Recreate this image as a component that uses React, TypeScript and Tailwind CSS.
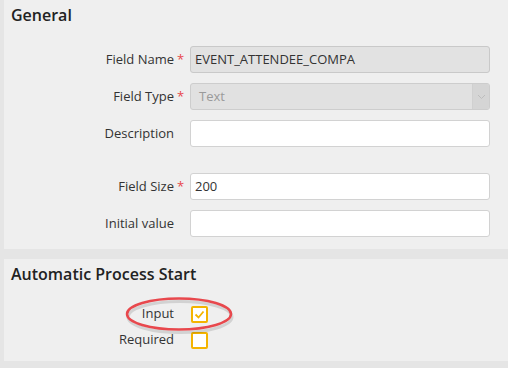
import { ReactNode } from 'react'

const fieldRows = [
  { label: 'Field Name', required: true, value: 'EVENT_ATTENDEE_COMPA', kind: 'readonly', gap: 'mt-[20px]' },
  { label: 'Field Type', required: true, value: 'Text', kind: 'select', gap: 'mt-[10px]' },
  { label: 'Description', required: false, value: '', kind: 'text', gap: 'mt-[10px]' },
  { label: 'Field Size', required: true, value: '200', kind: 'text', gap: 'mt-[26px]' },
  { label: 'Initial value', required: false, value: '', kind: 'text', gap: 'mt-[10px]' },
]

function Row({ label, required, gap, children }: { label: string; required?: boolean; gap: string; children: ReactNode }) {
  return (
    <div className={`flex items-center ${gap}`}>
      <div className="w-[170px] text-right text-[13px] text-[#333]">{label}</div>
      <div className="w-[16px] pl-[3px] text-[13px] leading-none text-[#e8474b]">{required ? '*' : ''}</div>
      {children}
    </div>
  )
}

function FieldInput({ kind, value }: { kind: string; value: string }) {
  if (kind === 'select') {
    return (
      <div className="flex h-[27px] w-[300px] items-stretch overflow-hidden rounded-[3px] border border-[#cdcdcd] bg-[#e1e1e1]">
        <div className="flex-1 pl-[8px] text-[13px] leading-[25px] text-[#9a9a9a]">{value}</div>
        <div className="flex w-[17px] items-center justify-center border-l border-[#d0d0d0] bg-[#d5d5d5]">
          <svg width="9" height="6" viewBox="0 0 9 6" fill="none">
            <path d="M1 1l3.5 3.5L8 1" stroke="#bdbdbd" strokeWidth="1" />
          </svg>
        </div>
      </div>
    )
  }
  const readonly = kind === 'readonly'
  return (
    <div
      className={`h-[27px] w-[300px] rounded-[3px] border pl-[4px] text-[13px] leading-[25px] text-[#333] ${
        readonly ? 'border-[#c9c9c9] bg-[#e2e2e2]' : 'border-[#d2d2d2] bg-white'
      }`}
    >
      {value}
    </div>
  )
}

function Checkbox({ checked }: { checked?: boolean }) {
  return (
    <div className="ml-[17px] flex h-[17px] w-[17px] items-center justify-center rounded-[2px] border-2 border-[#f4b400] bg-white">
      {checked && (
        <svg width="11" height="9" viewBox="0 0 11 9" fill="none">
          <path d="M1.5 4.5l3 3L9.5 1.5" stroke="#f4b400" strokeWidth="1.8" />
        </svg>
      )}
    </div>
  )
}

export default function App() {
  return (
    <div className="h-[368px] w-[508px] bg-[#e5e5e5] pl-[4px] font-['Open_Sans',sans-serif]">
      <section className="bg-[#efefef] pb-[12px] pt-[4px]">
        <h2 className="pl-[7px] text-[16px] font-semibold leading-[22px] text-[#222]">General</h2>
        {fieldRows.map(row => (
          <Row key={row.label} label={row.label} required={row.required} gap={row.gap}>
            <FieldInput kind={row.kind} value={row.value} />
          </Row>
        ))}
      </section>

      <section className="relative mt-[10px] bg-[#efefef] pb-[8px] pt-[4px]">
        <h2 className="pl-[7px] text-[16px] font-semibold leading-[22px] text-[#222]">Automatic Process Start</h2>
        <div className="mt-[16px] flex h-[26px] items-center">
          <div className="w-[170px] text-right text-[13px] text-[#333]">Input</div>
          <Checkbox checked />
        </div>
        <div className="flex h-[26px] items-center">
          <div className="w-[170px] text-right text-[13px] text-[#333]">Required</div>
          <Checkbox />
        </div>

        {/* red highlight round the Input checkbox */}
        <svg className="absolute left-[120px] top-[37px]" width="112" height="38" viewBox="0 0 112 38" fill="none">
          <ellipse cx="55" cy="19" rx="52" ry="15.5" stroke="#000" strokeOpacity="0.12" strokeWidth="3" transform="translate(1 2)" />
          <ellipse cx="55" cy="18" rx="52" ry="15.5" stroke="#e8484d" strokeWidth="2.5" />
        </svg>
      </section>
    </div>
  )
}
